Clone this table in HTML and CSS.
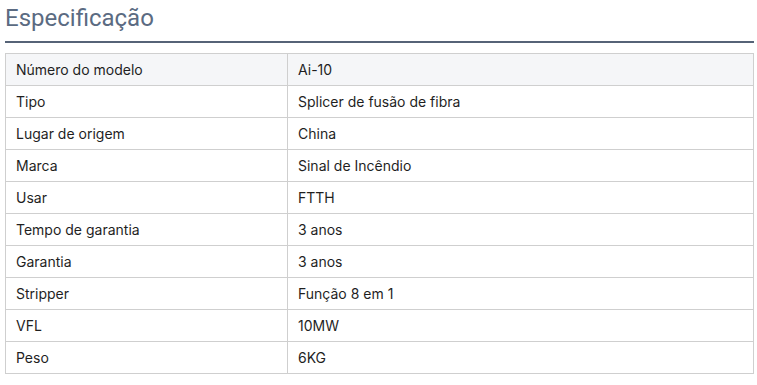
FILE: index.html
```html
<!DOCTYPE html>
<html lang="pt">
<head>
<meta charset="utf-8">
<link rel="stylesheet" href="styles.css">
</head>
<body>
<section class="spec">
  <h2 class="spec-title">Especificação</h2>
  <table class="spec-table">
    <tbody>
      <tr class="first"><td>Número do modelo</td><td>Ai-10</td></tr>
      <tr><td>Tipo</td><td>Splicer de fusão de fibra</td></tr>
      <tr><td>Lugar de origem</td><td>China</td></tr>
      <tr><td>Marca</td><td>Sinal de Incêndio</td></tr>
      <tr><td>Usar</td><td>FTTH</td></tr>
      <tr><td>Tempo de garantia</td><td>3 anos</td></tr>
      <tr><td>Garantia</td><td>3 anos</td></tr>
      <tr><td>Stripper</td><td>Função 8 em 1</td></tr>
      <tr><td>VFL</td><td>10MW</td></tr>
      <tr><td>Peso</td><td>6KG</td></tr>
    </tbody>
  </table>
</section>
</body>
</html>
```
FILE: styles.css
```css
html, body {
  margin: 0;
  padding: 0;
  background: #fff;
}
.spec {
  padding: 0 3px 0 5px;
}
.spec-title {
  margin: 0;
  font-family: Roboto, "Liberation Sans", sans-serif;
  font-weight: 400;
  font-size: 24px;
  line-height: 28px;
  padding-top: 4px;
  padding-bottom: 9px;
  color: #5b6b82;
  border-bottom: 2px solid #566377;
}
.spec-table {
  margin-top: 10px;
  width: 100%;
  border-collapse: collapse;
  font-family: Inter, "Noto Sans", sans-serif;
  font-size: 14px;
  color: #1f1f1f;
}
.spec-table td {
  border: 1px solid #cfcfcf;
  height: 32px;
  padding: 0 10px;
  box-sizing: border-box;
}
.spec-table td:first-child {
  width: 282px;
}
.spec-table tr.first td {
  background: #f5f6f8;
}
```
